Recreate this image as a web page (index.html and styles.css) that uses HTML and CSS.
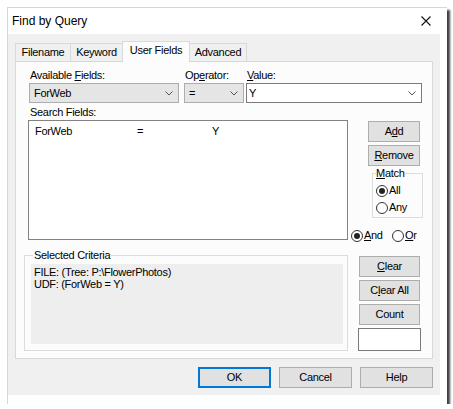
FILE: index.html
```html
<!DOCTYPE html>
<html>
<head>
<meta charset="utf-8">
<title>Find by Query</title>
<link rel="stylesheet" href="styles.css">
</head>
<body>
<div class="window">
  <div class="titlebar">
    <span class="title">Find by Query</span>
    <svg class="close" width="10" height="10" viewBox="0 0 10 10"><path d="M0.5 0.5 L9.5 9.5 M9.5 0.5 L0.5 9.5" stroke="#111" stroke-width="1.1" fill="none"/></svg>
  </div>
  <div class="client">
    <div class="tabs">
      <div class="tab t-file">Filename</div>
      <div class="tab t-key">Keyword</div>
      <div class="tab t-user active">User Fields</div>
      <div class="tab t-adv">Advanced</div>
    </div>
    <div class="panel">
      <div class="fields">
        <div class="field f-avail">
          <div class="label">Available <u>F</u>ields:</div>
          <div class="combo ro"><span>ForWeb</span><svg class="chev" width="8" height="5" viewBox="0 0 8 5"><path d="M0.5 0.5 L4 4 L7.5 0.5" stroke="#555" fill="none"/></svg></div>
        </div>
        <div class="field f-op">
          <div class="label">Op<u>e</u>rator:</div>
          <div class="combo ro"><span>=</span><svg class="chev" width="8" height="5" viewBox="0 0 8 5"><path d="M0.5 0.5 L4 4 L7.5 0.5" stroke="#555" fill="none"/></svg></div>
        </div>
        <div class="field f-val">
          <div class="label"><u>V</u>alue:</div>
          <div class="combo ed"><span>Y</span><svg class="chev" width="8" height="5" viewBox="0 0 8 5"><path d="M0.5 0.5 L4 4 L7.5 0.5" stroke="#555" fill="none"/></svg></div>
        </div>
      </div>
      <div class="label search-label">Search Fields:</div>
      <div class="middle">
        <div class="list">
          <div class="row"><span class="c1">ForWeb</span><span class="c2">=</span><span class="c3">Y</span></div>
        </div>
        <div class="side">
          <div class="btn b-add">A<u>d</u>d</div>
          <div class="btn b-remove"><u>R</u>emove</div>
          <fieldset class="group match">
            <legend><u>M</u>atch</legend>
            <div class="radio"><span class="dot on"></span><span>All</span></div>
            <div class="radio r2"><span class="dot"></span><span>Any</span></div>
          </fieldset>
          <div class="andor">
            <div class="radio r-and"><span class="dot on"></span><span><u>A</u>nd</span></div>
            <div class="radio"><span class="dot"></span><span><u>O</u>r</span></div>
          </div>
        </div>
      </div>
      <div class="bottom">
        <fieldset class="group criteria">
          <legend>Selected Criteria</legend>
          <div class="crit-text">FILE: (Tree: P:\FlowerPhotos)<br>UDF: (ForWeb = Y)</div>
        </fieldset>
        <div class="side2">
          <div class="btn b-sm"><u>C</u>lear</div>
          <div class="btn b-sm">C<u>l</u>ear All</div>
          <div class="btn b-sm">Count</div>
          <div class="countbox"></div>
        </div>
      </div>
    </div>
    <div class="actions">
      <div class="btn b-act default">OK</div>
      <div class="btn b-act">Cancel</div>
      <div class="btn b-act">Help</div>
    </div>
  </div>
</div>
</body>
</html>
```

FILE: styles.css
```css
* { box-sizing: border-box; }
html, body { margin: 0; padding: 0; background: #fff; }
body {
  font-family: "Liberation Sans", Arial, sans-serif;
  font-size: 11px;
  letter-spacing: -0.3px;
  color: #000;
}
u { text-decoration-thickness: 1px; text-underline-offset: 1px; }

.window {
  margin: 7px 0 0 7px;
  width: 440px;
  height: 397px;
  border-top: 1px solid #d6d6d6;
  border-left: 1px solid #d6d6d6;
  background: #fff;
  box-shadow: 3px 3px 2px rgba(0, 0, 0, 0.75);
  display: flex;
  flex-direction: column;
}

.titlebar {
  height: 26px;
  display: flex;
  align-items: center;
  padding-left: 4px;
  padding-right: 16px;
}
.title { font-size: 12px; letter-spacing: 0; line-height: 26px; }
.close { margin-left: auto; display: block; }

.client {
  width: 432px;
  height: 361px;
  background: #f0f0f0;
  padding: 7px 7px 0 7px;
}

.tabs {
  display: flex;
  align-items: flex-end;
  height: 20px;
  position: relative;
  z-index: 1;
}
.tab {
  height: 18px;
  border: 1px solid #d9d9d9;
  border-bottom: none;
  background: #f0f0f0;
  text-align: center;
  line-height: 17px;
  margin-left: -1px;
}
.t-file { width: 56px; margin-left: 0; }
.t-key { width: 53px; }
.t-user { width: 68px; }
.t-adv { width: 58px; }
.tab.active {
  height: 21px;
  margin-bottom: -1px;
  background: #fcfcfc;
  line-height: 17px;
  padding-top: 0;
}

.panel {
  width: 418px;
  height: 298px;
  border: 1px solid #d9d9d9;
  background: #fcfcfc;
  padding-top: 7px;
}

.label { line-height: 13px; padding-left: 1px; }

.fields { display: flex; margin-left: 13px; }
.field .label { margin-bottom: 1px; }
.f-avail { width: 150px; }
.f-op { width: 60px; margin-left: 5px; }
.f-val { width: 176px; margin-left: 2px; }

.combo {
  height: 20px;
  border: 1px solid #adadad;
  display: flex;
  align-items: center;
  padding: 0 5px 0 4px;
  line-height: 18px;
}
.combo.ro { background: #e5e5e5; }
.combo.ed { background: #fff; border-color: #7a7a7a; padding-left: 2px; }
.chev { margin-left: auto; display: block; }

.search-label { margin: 3px 0 1px 13px; }

.middle { display: flex; margin-left: 12px; height: 120px; }
.list {
  width: 320px;
  height: 120px;
  border: 1px solid #828282;
  background: #fff;
  padding: 4px 0 0 6px;
  line-height: 13px;
}
.row { display: flex; }
.c1 { width: 102px; }
.c2 { width: 75px; }

.side { display: flex; flex-direction: column; padding-top: 1px; }

.btn {
  height: 21px;
  border: 1px solid #adadad;
  background: #e1e1e1;
  display: flex;
  align-items: center;
  justify-content: center;
  line-height: 19px;
}
.b-add, .b-remove { width: 52px; margin-left: 20px; }
.b-remove { margin-top: 3px; }

.group {
  margin: 0;
  border: 1px solid #dcdcdc;
  min-inline-size: 0;
}
.group legend { line-height: 13px; padding: 0 1px 0 0; }

.match {
  width: 51px;
  margin: 1px 0 0 24px;
  padding: 4px 0 3px 3px;
}

.radio { display: flex; align-items: center; height: 13px; line-height: 13px; gap: 1px; }
.radio.r2 { margin-top: 4px; }
.dot {
  width: 12px;
  height: 12px;
  border: 1px solid #333;
  border-radius: 50%;
  background: #fff;
  display: grid;
  place-items: center;
  flex: none;
}
.dot.on::after {
  content: "";
  width: 6px;
  height: 6px;
  border-radius: 50%;
  background: #222;
}

.andor { display: flex; margin: 11px 0 0 3px; }
.r-and { width: 41px; }

.bottom { display: flex; margin: 9px 0 0 8px; }
.criteria {
  width: 324px;
  padding: 2px 4px 4px 6px;
}
.criteria legend { margin-left: 2px; padding: 0 1px; }
.crit-text {
  height: 80px;
  background: #eeeeee;
  padding: 2px 0 0 3px;
  line-height: 12px;
}

.side2 { display: flex; flex-direction: column; margin-left: 11px; padding-top: 7px; }
.b-sm { width: 61px; }
.b-sm + .b-sm { margin-top: 3px; }
.countbox {
  width: 63px;
  height: 23px;
  margin: 3px 0 0 -1px;
  border: 1px solid #7a7a7a;
  background: #fff;
}

.actions {
  display: flex;
  justify-content: flex-end;
  gap: 8px;
  margin-top: 8px;
}
.b-act { width: 73px; }
.b-act.default { border-color: #0078d7; box-shadow: inset 0 0 0 1px #0078d7; }
```
